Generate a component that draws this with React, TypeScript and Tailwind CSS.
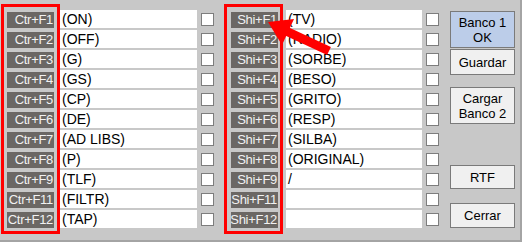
import React from 'react';

const left = ['(ON)', '(OFF)', '(G)', '(GS)', '(CP)', '(DE)', '(AD LIBS)', '(P)', '(TLF)', '(FILTR)', '(TAP)'];
const right = ['(TV)', '(RADIO)', '(SORBE)', '(BESO)', '(GRITO)', '(RESP)', '(SILBA)', '(ORIGINAL)', '/', '', ''];
const keys = ['F1', 'F2', 'F3', 'F4', 'F5', 'F6', 'F7', 'F8', 'F9', 'F11', 'F12'];

function KeyLabel({ text }: { text: string }) {
  return (
    <div className="w-[47px] h-[16px] bg-[#6b6764] text-[#f2f2f2] text-[13px] leading-[16px] tracking-[-0.3px] flex justify-end overflow-hidden whitespace-nowrap pr-[1px]">
      {text}
    </div>
  );
}

function Field({ value, width }: { value: string; width: string }) {
  return (
    <div className={`${width} h-[18px] bg-white text-black text-[14px] leading-[18px] pl-[2px] whitespace-nowrap overflow-hidden`}>
      {value}
    </div>
  );
}

function Check() {
  return <div className="w-[13px] h-[13px] bg-white border border-[#7d7d7d] self-center" />;
}

function Btn({ children, className }: { children: React.ReactNode; className: string }) {
  return (
    <div className={`w-[65px] flex flex-col items-center justify-center text-[13px] leading-[15px] text-black border border-[#7a7a7a] ${className}`}>
      {children}
    </div>
  );
}

export default function App() {
  return (
    <div
      className="relative w-[522px] h-[242px] bg-[#c8c8c8] border-r-2 border-b-2 border-[#a4a4a4] overflow-hidden flex"
      style={{ fontFamily: '"Liberation Sans", Arial, sans-serif' }}
    >
      {/* key rows */}
      <div className="pl-[7px] pt-[10px] flex flex-col gap-[2px]">
        {keys.map((k, i) => (
          <div key={k} className="flex items-end h-[18px]">
            <KeyLabel text={`Ctr+${k}`} />
            <div className="ml-[6px]">
              <Field value={left[i]} width="w-[137px]" />
            </div>
            <div className="ml-[4px] flex h-[18px]">
              <Check />
            </div>
            <div className="ml-[17px]">
              <KeyLabel text={`Shi+${k}`} />
            </div>
            <div className="ml-[8px]">
              <Field value={right[i]} width="w-[136px]" />
            </div>
            <div className="ml-[4px] flex h-[18px]">
              <Check />
            </div>
          </div>
        ))}
      </div>

      {/* buttons */}
      <div className="ml-[11px] pt-[11px] flex flex-col">
        <Btn className="h-[37px] bg-[#bccde9]">
          <span>Banco 1</span>
          <span>OK</span>
        </Btn>
        <Btn className="mt-[1px] h-[26px] bg-[#f0f0f0]">Guardar</Btn>
        <Btn className="mt-[12px] h-[37px] bg-[#f0f0f0]">
          <span>Cargar</span>
          <span>Banco 2</span>
        </Btn>
        <Btn className="mt-[41px] h-[24px] bg-[#f0f0f0]">RTF</Btn>
        <Btn className="mt-[14px] h-[25px] bg-[#f0f0f0]">Cerrar</Btn>
      </div>

      {/* annotations */}
      <div className="absolute left-[1px] top-[4px] w-[59px] h-[230px] border-[3px] border-[#ff0000]" />
      <div className="absolute left-[224px] top-[4px] w-[59px] h-[230px] border-[3px] border-[#ff0000]" />
      <svg className="absolute left-0 top-0" width="522" height="242">
        <line x1="286" y1="31" x2="329" y2="51" stroke="#ff0000" strokeWidth="9" />
        <polygon points="268,22 294,19 282,45" fill="#ff0000" />
      </svg>
    </div>
  );
}
